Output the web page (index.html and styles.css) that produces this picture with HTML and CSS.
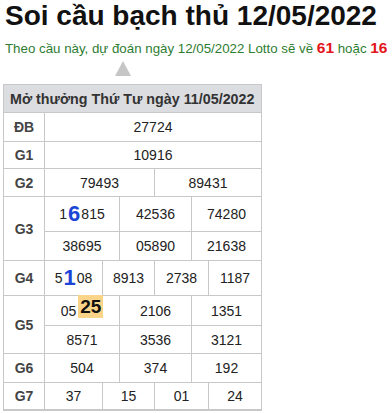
FILE: index.html
```html
<!DOCTYPE html>
<html lang="vi">
<head>
<meta charset="utf-8">
<link rel="stylesheet" href="styles.css">
</head>
<body>
<div class="page">
  <h1 class="title">Soi cầu bạch thủ 12/05/2022</h1>
  <p class="predict">Theo cầu này, dự đoán ngày 12/05/2022 Lotto sẽ về <b class="hot">61</b> hoặc <b class="hot">16</b></p>
  <div class="arrow"></div>
  <div class="result">
    <div class="cell head">Mở thưởng Thứ Tư ngày 11/05/2022</div>

    <div class="cell lbl">ĐB</div>
    <div class="cell full">27724</div>

    <div class="cell lbl">G1</div>
    <div class="cell full">10916</div>

    <div class="cell lbl">G2</div>
    <div class="cell half1">79493</div>
    <div class="cell half2">89431</div>

    <div class="cell lbl two">G3</div>
    <div class="cell t1">1<span class="pick">6</span>815</div>
    <div class="cell t2">42536</div>
    <div class="cell t3">74280</div>
    <div class="cell t1">38695</div>
    <div class="cell t2">05890</div>
    <div class="cell t3">21638</div>

    <div class="cell lbl">G4</div>
    <div class="cell q1">5<span class="pick">1</span>08</div>
    <div class="cell q2">8913</div>
    <div class="cell q3">2738</div>
    <div class="cell q4">1187</div>

    <div class="cell lbl two">G5</div>
    <div class="cell t1">05<span class="lotto">25</span></div>
    <div class="cell t2">2106</div>
    <div class="cell t3">1351</div>
    <div class="cell t1">8571</div>
    <div class="cell t2">3536</div>
    <div class="cell t3">3121</div>

    <div class="cell lbl">G6</div>
    <div class="cell t1">504</div>
    <div class="cell t2">374</div>
    <div class="cell t3">192</div>

    <div class="cell lbl">G7</div>
    <div class="cell q1">37</div>
    <div class="cell q2">15</div>
    <div class="cell q3">01</div>
    <div class="cell q4">24</div>
  </div>
</div>
</body>
</html>
```

FILE: styles.css
```css
html, body {
  margin: 0;
  padding: 0;
  background: #fff;
}

.page {
  font-family: "Liberation Sans", Arial, sans-serif;
  color: #222;
}

.title {
  margin: 0 0 0 5px;
  font-size: 28px;
  line-height: 31px;
  font-weight: bold;
  color: #111;
}

.predict {
  margin: 8px 0 0 5px;
  font-size: 13.3px;
  line-height: 18px;
  color: #2e7d32;
  white-space: nowrap;
}

.hot {
  color: #e3151b;
  font-size: 15.5px;
}

.arrow {
  width: 0;
  height: 0;
  margin: 3px 0 0 115px;
  border-left: 8px solid transparent;
  border-right: 8px solid transparent;
  border-bottom: 15px solid #c6c6c6;
}

.result {
  display: grid;
  grid-template-columns: 40px 57px 16px 34px 36px 16px 52px;
  grid-template-rows: 27px 28px 26px 27px 34px 28px 34px 29px 27px 28px 26px;
  gap: 1px;
  padding: 1px 1px 2px 1px;
  margin: 8px 0 0 3px;
  width: 257px;
  background: #c8c8c8;
}

.cell {
  background: #fff;
  display: flex;
  align-items: center;
  justify-content: center;
  font-size: 14px;
  color: #222;
  white-space: nowrap;
}

.head {
  grid-column: 1 / 8;
  justify-content: flex-start;
  padding-left: 6px;
  background: #dcdde1;
  font-weight: bold;
  font-size: 14.3px;
  color: #333;
}

.lbl {
  grid-column: 1 / 2;
  font-weight: bold;
  color: #444;
}

.two {
  grid-row: span 2;
}

.full { grid-column: 2 / 8; }
.half1 { grid-column: 2 / 5; }
.half2 { grid-column: 5 / 8; }

.t1 { grid-column: 2 / 4; }
.t2 { grid-column: 4 / 6; }
.t3 { grid-column: 6 / 8; }

.q1 { grid-column: 2 / 3; }
.q2 { grid-column: 3 / 5; }
.q3 { grid-column: 5 / 7; }
.q4 { grid-column: 7 / 8; }

.pick {
  color: #1b45d6;
  font-weight: bold;
  font-size: 22px;
  line-height: 24px;
  margin: 0 1px;
}

.lotto {
  display: inline-block;
  margin-left: 2px;
  padding: 1px 2px;
  background: #fad589;
  color: #111;
  font-weight: bold;
  font-size: 19px;
  line-height: 21px;
  position: relative;
  top: -4px;
}
```
